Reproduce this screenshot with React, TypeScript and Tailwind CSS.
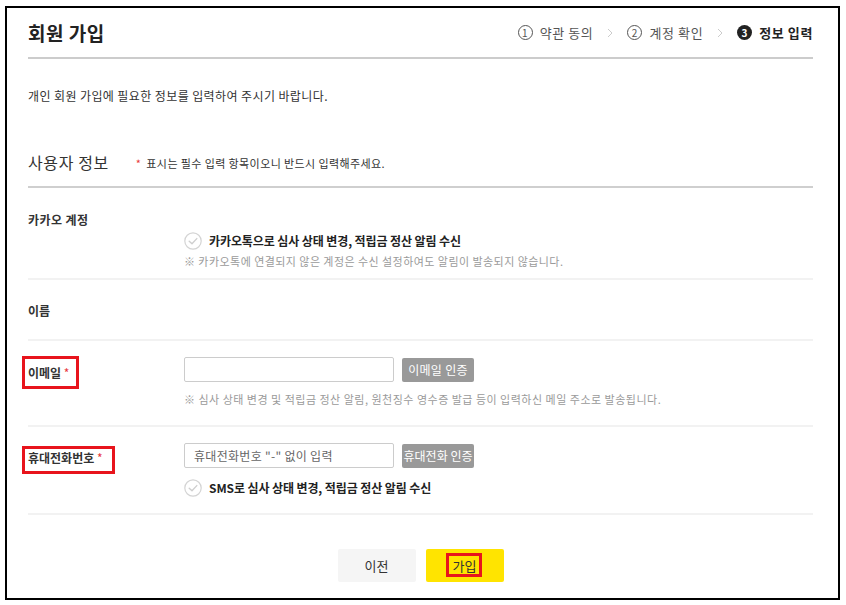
import React from "react";

function CheckCircle() {
  return (
    <svg width="18" height="18" viewBox="0 0 18 18" className="shrink-0">
      <circle cx="9" cy="9" r="8.2" fill="#fff" stroke="#d4d4d4" strokeWidth="1.2" />
      <path d="M5.2 9.2 L8 11.8 L12.8 6.6" fill="none" stroke="#cfcfcf" strokeWidth="1.4" strokeLinecap="round" strokeLinejoin="round" />
    </svg>
  );
}

function StepNum({ n, active }: { n: number; active?: boolean }) {
  return active ? (
    <span className="w-[15px] h-[15px] rounded-full bg-[#222] text-white text-[10px] font-bold flex items-center justify-center leading-none">
      {n}
    </span>
  ) : (
    <span className="w-[15px] h-[15px] rounded-full border border-[#555] text-[#555] text-[10px] flex items-center justify-center leading-none">
      {n}
    </span>
  );
}

function Chevron() {
  return (
    <svg width="8" height="10" viewBox="0 0 8 10" className="mx-[13px]">
      <path d="M2 1 L6 5 L2 9" fill="none" stroke="#cccccc" strokeWidth="1" />
    </svg>
  );
}

export default function App() {
  return (
    <div className="w-[846px] h-[605px] bg-white font-['Noto_Sans_CJK_KR','Noto_Sans',sans-serif] text-[#333] pt-[6px] pl-[5px]">
      <div className="w-[835px] h-[594px] border-2 border-black pl-[21px] pr-[25px]">
        {/* header */}
        <div className="h-[49px] flex items-center justify-between border-b-2 border-[#cccccc] box-content">
          <h1 className="text-[19px] font-bold text-[#222] leading-none tracking-[0.5px]">회원 가입</h1>
          <div className="flex items-center text-[13px] text-[#555] leading-none tracking-[0.6px]">
            <StepNum n={1} />
            <span className="ml-[7px]">약관 동의</span>
            <Chevron />
            <StepNum n={2} />
            <span className="ml-[7px]">계정 확인</span>
            <Chevron />
            <StepNum n={3} active />
            <span className="ml-[7px] font-bold text-[#222]">정보 입력</span>
          </div>
        </div>

        <p className="mt-[29px] text-[12px] leading-[16px] text-[#333] tracking-[0.4px]">
          개인 회원 가입에 필요한 정보를 입력하여 주시기 바랍니다.
        </p>

        {/* section title */}
        <div className="mt-[52px] h-[30px] flex items-start border-b-2 border-[#cfcfcf] box-content">
          <h2 className="text-[16px] leading-[20px] text-[#333] mt-[-4px] tracking-[0.6px]">사용자 정보</h2>
          <span className="ml-[27px] text-[11px] leading-[16px] text-[#333] mt-[-1px] tracking-[0.4px]">
            <span className="text-[#e8383d] mr-[5px]">*</span>표시는 필수 입력 항목이오니 반드시 입력해주세요.
          </span>
        </div>

        {/* kakao row */}
        <div className="flex border-b-2 border-[#f2f2f2] h-[92px]">
          <div className="w-[156px] pt-[24px] text-[12px] leading-[16px] font-bold text-[#333] tracking-[0.4px]">카카오 계정</div>
          <div className="pt-[44px]">
            <div className="flex items-center h-[18px]">
              <CheckCircle />
              <span className="ml-[7px] text-[12px] font-bold text-[#222] leading-none tracking-[-0.1px]">
                카카오톡으로 심사 상태 변경, 적립금 정산 알림 수신
              </span>
            </div>
            <p className="mt-[3px] text-[11px] leading-[16px] text-[#9a9a9a] tracking-[0.45px]">
              ※ 카카오톡에 연결되지 않은 계정은 수신 설정하여도 알림이 발송되지 않습니다.
            </p>
          </div>
        </div>

        {/* name row */}
        <div className="flex items-center border-b-2 border-[#f2f2f2] h-[61px]">
          <div className="w-[156px] text-[12px] leading-[16px] font-bold text-[#333] mt-[2px]">이름</div>
        </div>

        {/* email row */}
        <div className="flex border-b-2 border-[#f2f2f2] h-[86px]">
          <div className="w-[156px] pt-[24px] text-[12px] leading-[16px]">
            <span className="relative inline-block font-bold text-[#333]">
              이메일 <span className="text-[#e8383d] font-normal">*</span>
              <span className="absolute left-[-6px] top-[-9px] w-[57px] h-[33px] border-[3px] border-[#e8141c]" />
            </span>
          </div>
          <div className="pt-[16px]">
            <div className="flex items-center">
              <input className="w-[210px] h-[25px] border border-[#cccccc] rounded-[2px] px-[8px] text-[12px] outline-none" />
              <button className="ml-[8px] w-[72px] h-[24px] bg-[#999999] text-white text-[12px] rounded-[2px] leading-none tracking-[0.3px]">이메일 인증</button>
            </div>
            <p className="mt-[9px] text-[11px] leading-[16px] text-[#9a9a9a] tracking-[0.5px]">
              ※ 심사 상태 변경 및 적립금 정산 알림, 원천징수 영수증 발급 등이 입력하신 메일 주소로 발송됩니다.
            </p>
          </div>
        </div>

        {/* phone row */}
        <div className="flex border-b-2 border-[#f2f2f2] h-[88px]">
          <div className="w-[156px] pt-[23px] text-[12px] leading-[16px]">
            <span className="relative inline-block font-bold text-[#333] whitespace-nowrap">
              휴대전화번호 <span className="text-[#e8383d] font-normal">*</span>
              <span className="absolute left-[-6px] top-[-4px] w-[93px] h-[28px] border-[3px] border-[#e8141c]" />
            </span>
          </div>
          <div className="pt-[16px]">
            <div className="flex items-center">
              <input
                placeholder={'휴대전화번호 "-" 없이 입력'}
                className="w-[210px] h-[25px] border border-[#cccccc] rounded-[2px] px-[9px] text-[12px] outline-none placeholder:text-[#666] tracking-[0.3px]"
              />
              <button className="ml-[8px] w-[72px] h-[24px] bg-[#999999] text-white text-[12px] rounded-[2px] leading-none whitespace-nowrap">휴대전화 인증</button>
            </div>
            <div className="flex items-center h-[18px] mt-[11px]">
              <CheckCircle />
              <span className="ml-[7px] text-[12px] font-bold text-[#222] leading-none tracking-[-0.1px]">
                SMS로 심사 상태 변경, 적립금 정산 알림 수신
              </span>
            </div>
          </div>
        </div>

        {/* buttons */}
        <div className="flex justify-center gap-[10px] mt-[34px]">
          <button className="w-[78px] h-[33px] bg-[#f5f5f5] text-[13px] text-[#333] rounded-[2px]">이전</button>
          <button className="relative w-[78px] h-[33px] bg-[#ffe400] text-[13px] text-[#333] rounded-[2px]">
            가입
            <span className="absolute left-[20px] top-[4px] w-[36px] h-[24px] border-[3px] border-[#e8141c]" />
          </button>
        </div>
      </div>
    </div>
  );
}
